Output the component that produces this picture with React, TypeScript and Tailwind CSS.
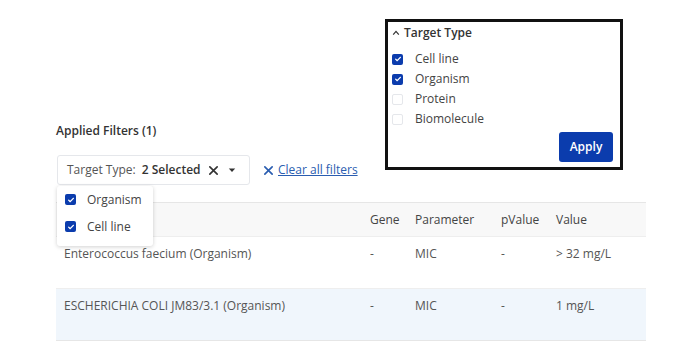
import React from 'react'

const font = { fontFamily: '"Open Sans", "Liberation Sans", sans-serif' }

function Box({ checked, size = 'w-[11px] h-[11px]' }: { checked: boolean; size?: string }) {
  if (!checked) return <span className={`${size} rounded-[2px] border border-gray-200 bg-white inline-block`} />
  return (
    <span className={`${size} rounded-[2px] bg-[#0b3cad] inline-flex items-center justify-center`}>
      <svg viewBox="0 0 12 12" className="w-[8px] h-[8px]" fill="none" stroke="white" strokeWidth={2} strokeLinecap="round" strokeLinejoin="round">
        <path d="M2.5 6.2l2.3 2.3 4.7-5" />
      </svg>
    </span>
  )
}

const rows = [
  { name: 'Enterococcus faecium (Organism)', gene: '-', param: 'MIC', p: '-', value: '> 32 mg/L', bg: 'bg-white' },
  { name: 'ESCHERICHIA COLI JM83/3.1 (Organism)', gene: '-', param: 'MIC', p: '-', value: '1 mg/L', bg: 'bg-[#f0f6fc]' },
]

export default function App() {
  return (
    <div className="relative w-[679px] h-[355px] bg-white text-[12px] text-[#555] overflow-hidden" style={font}>
      <div className="pl-[56px] pt-[123px]">
        <p className="font-semibold text-[#333] leading-4">Applied Filters (1)</p>

        {/* chip + clear */}
        <div className="flex items-center mt-4">
          <div className="flex items-center h-[30px] w-[193px] ml-px px-[9px] border border-gray-200 rounded-[3px] text-[#555]">
            <span>Target Type:</span>
            <span className="ml-[6px] font-semibold text-[#333]">2 Selected</span>
            <svg viewBox="0 0 12 12" className="w-[11px] h-[11px] ml-[7px]" stroke="#333" strokeWidth={1.8} strokeLinecap="round">
              <path d="M2 2l8 8M10 2l-8 8" />
            </svg>
            <svg viewBox="0 0 10 10" className="w-[8px] h-[8px] ml-[9px]" fill="#333">
              <path d="M1 3h8L5 7.5z" />
            </svg>
          </div>
          <div className="flex items-center ml-[13px] text-[#2a5db0]">
            <svg viewBox="0 0 12 12" className="w-[11px] h-[11px]" stroke="#2a5db0" strokeWidth={1.8} strokeLinecap="round">
              <path d="M2 2l8 8M10 2l-8 8" />
            </svg>
            <span className="ml-[4px] underline">Clear all filters</span>
          </div>
        </div>

        {/* table */}
        <div className="mt-[17px] w-[590px] border-b border-[#e6e6e6]">
          <div className="flex h-[34px] items-center bg-[#f8f8f8] border-t border-[#e6e6e6] text-[#444]">
            <div className="w-[306px] pl-2" />
            <div className="w-[45px] pl-2">Gene</div>
            <div className="w-[86px] pl-2">Parameter</div>
            <div className="w-[55px] pl-2">pValue</div>
            <div className="w-[98px] pl-2">Value</div>
          </div>
          {rows.map(r => (
            <div key={r.name} className={`flex h-[52px] pt-[8px] border-t border-[#eeeeee] ${r.bg}`}>
              <div className="w-[306px] pl-2">{r.name}</div>
              <div className="w-[45px] pl-2">{r.gene}</div>
              <div className="w-[86px] pl-2">{r.param}</div>
              <div className="w-[55px] pl-2">{r.p}</div>
              <div className="w-[98px] pl-2">{r.value}</div>
            </div>
          ))}
        </div>
      </div>

      {/* chip dropdown */}
      <div className="absolute left-[57px] top-[186px] w-[96px] h-[60px] bg-white rounded-[3px] shadow-[0_1px_4px_rgba(0,0,0,0.18)] pl-[8px] pt-[6px] text-[#444]">
        <div className="flex items-center h-[15px] gap-[11px]"><Box checked /><span>Organism</span></div>
        <div className="flex items-center h-[15px] gap-[11px] mt-[12px]"><Box checked /><span>Cell line</span></div>
      </div>

      {/* target type popup */}
      <div className="absolute left-[385px] top-[19px] w-[238px] h-[151px] border-[3px] border-[#111] bg-white px-[4px] pt-[3px] text-[#444]">
        <div className="flex items-center gap-[4px] font-semibold text-[#333] leading-4">
          <svg viewBox="0 0 10 10" className="w-[8px] h-[8px]" fill="none" stroke="#333" strokeWidth={1.5}>
            <path d="M1.5 7L5 3 8.5 7" />
          </svg>
          <span>Target Type</span>
        </div>
        <div className="mt-[8px] flex flex-col">
          {[['Cell line', true], ['Organism', true], ['Protein', false], ['Biomolecule', false]].map(([l, c]) => (
            <div key={l as string} className="flex items-center h-[20px] gap-[12px]">
              <Box checked={c as boolean} />
              <span>{l as string}</span>
            </div>
          ))}
        </div>
        <div className="flex justify-end pr-[3px] mt-[3px]">
          <button className="w-[54px] h-[30px] rounded-[3px] bg-[#0b3cad] text-white font-semibold text-[12px]">Apply</button>
        </div>
      </div>
    </div>
  )
}
